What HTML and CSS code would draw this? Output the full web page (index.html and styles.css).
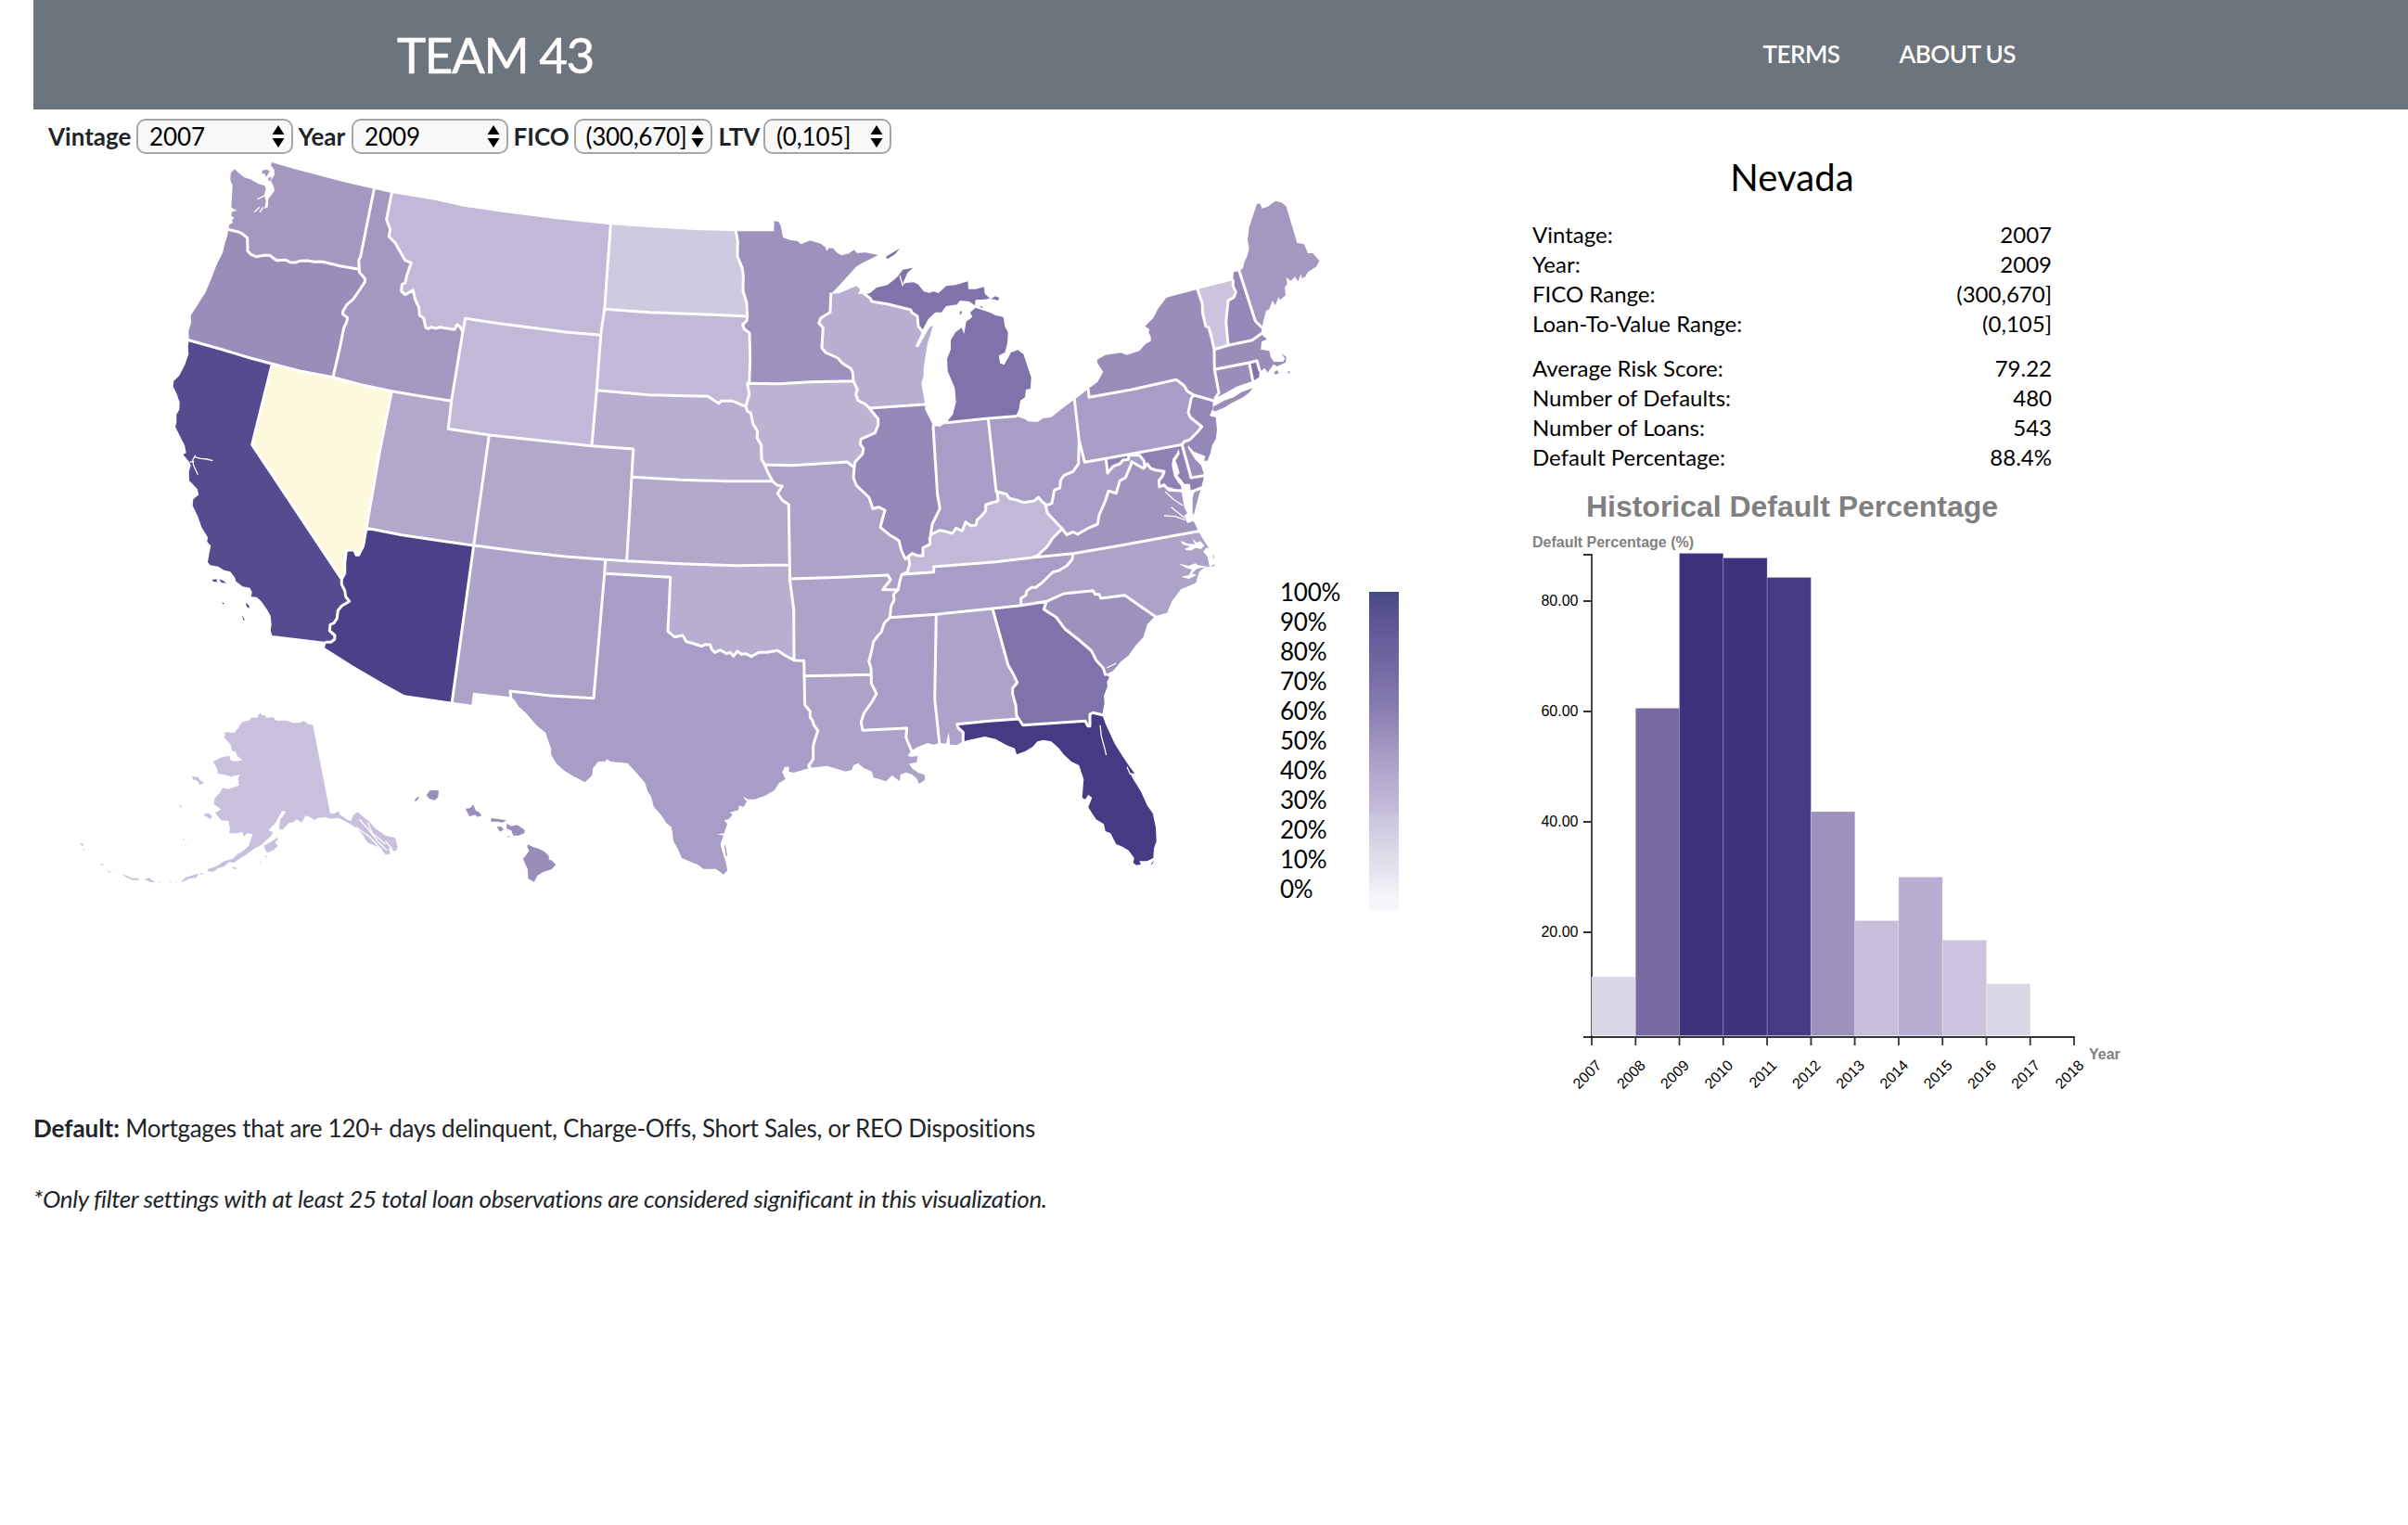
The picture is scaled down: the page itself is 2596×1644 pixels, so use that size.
FILE: index.html
```html
<!DOCTYPE html>
<html lang="en">
<head>
<meta charset="utf-8">
<title>Team 43</title>
<link rel="stylesheet" href="styles.css">
</head>
<body>
<header class="topbar">
  <h1 class="brand">TEAM 43</h1>
  <nav class="nav"><a class="nav-link">TERMS</a><a class="nav-link">ABOUT US</a></nav>
</header>
<main class="main">
  <section class="map-panel">
    <div class="filters">
      <label class="filter-label l-vintage">Vintage</label>
      <div class="select s-vintage"><span>2007</span><svg class="arrows" viewBox="0 0 14 24"><path d="M7 0L13.5 10H.5zM7 24L13.5 14H.5z"/></svg></div>
      <label class="filter-label l-year">Year</label>
      <div class="select s-year"><span>2009</span><svg class="arrows" viewBox="0 0 14 24"><path d="M7 0L13.5 10H.5zM7 24L13.5 14H.5z"/></svg></div>
      <label class="filter-label l-fico">FICO</label>
      <div class="select s-fico"><span>(300,670]</span><svg class="arrows" viewBox="0 0 14 24"><path d="M7 0L13.5 10H.5zM7 24L13.5 14H.5z"/></svg></div>
      <label class="filter-label l-ltv">LTV</label>
      <div class="select s-ltv"><span>(0,105]</span><svg class="arrows" viewBox="0 0 14 24"><path d="M7 0L13.5 10H.5zM7 24L13.5 14H.5z"/></svg></div>
    </div>
    <svg class="map" viewBox="36 166 1560 1024" width="1560" height="1024">
      <defs>
        <linearGradient id="ramp" x1="0" y1="0" x2="0" y2="1">
          <stop offset="0" stop-color="#464a86"/><stop offset=".08" stop-color="#5b5393"/>
          <stop offset=".24" stop-color="#7569a3"/><stop offset=".38" stop-color="#8b80b1"/>
          <stop offset=".51" stop-color="#a79dc5"/><stop offset=".61" stop-color="#b8aed1"/>
          <stop offset=".69" stop-color="#c6bedb"/><stop offset=".7" stop-color="#cac4de"/>
          <stop offset=".8" stop-color="#dad6e6"/><stop offset=".91" stop-color="#ecebf4"/>
          <stop offset=".96" stop-color="#f6f5fa"/><stop offset="1" stop-color="#f7f6fb"/>
        </linearGradient>
      </defs>
      <g id="states"></g>
      <g class="legend">
        <text x="1380" y="648">100%</text><text x="1380" y="680">90%</text>
        <text x="1380" y="712">80%</text><text x="1380" y="744">70%</text>
        <text x="1380" y="776">60%</text><text x="1380" y="808">50%</text>
        <text x="1380" y="840">40%</text><text x="1380" y="872">30%</text>
        <text x="1380" y="904">20%</text><text x="1380" y="936">10%</text>
        <text x="1380" y="968">0%</text>
        <rect x="1476" y="638" width="32" height="344" fill="url(#ramp)"/>
      </g>
    </svg>
  </section>
  <section class="detail">
    <h2 class="state-name">Nevada</h2>
    <dl class="facts">
      <dt>Vintage:</dt><dd>2007</dd>
      <dt>Year:</dt><dd>2009</dd>
      <dt>FICO Range:</dt><dd>(300,670]</dd>
      <dt>Loan-To-Value Range:</dt><dd>(0,105]</dd>
    </dl>
    <dl class="facts">
      <dt>Average Risk Score:</dt><dd>79.22</dd>
      <dt>Number of Defaults:</dt><dd>480</dd>
      <dt>Number of Loans:</dt><dd>543</dd>
      <dt>Default Percentage:</dt><dd>88.4%</dd>
    </dl>
    <svg class="chart" viewBox="1652 516 660 680" width="660" height="680">
      <text class="chart-title" x="1710" y="557" textLength="444">Historical Default Percentage</text>
      <text class="axis-title" x="1652" y="589.5" textLength="174">Default Percentage (%)</text>
      <text class="axis-title" x="2252" y="1142">Year</text>
      <path class="axis" d="M1707 598H1716V1118H1707M1707 648H1716M1707 767H1716M1707 886H1716M1707 1005H1716"/>
      <path class="axis" d="M1716 1127V1118H2236V1127M1763.3 1118v9M1810.5 1118v9M1857.8 1118v9M1905.1 1118v9M1952.4 1118v9M1999.6 1118v9M2046.9 1118v9M2094.2 1118v9M2141.5 1118v9M2188.7 1118v9"/>
      <g class="bars">
        <rect x="1716" y="1053" width="47.3" height="63.5" fill="#dad6e6"/>
        <rect x="1763.3" y="763.5" width="47.3" height="353" fill="#7769a1"/>
        <rect x="1810.5" y="596.5" width="47.3" height="520" fill="#3c327d"/>
        <rect x="1857.8" y="601.5" width="47.3" height="515" fill="#3c327d"/>
        <rect x="1905.1" y="622.5" width="47.3" height="494" fill="#473a84"/>
        <rect x="1952.4" y="875" width="47.3" height="241.5" fill="#9d92bd"/>
        <rect x="1999.6" y="992.5" width="47.3" height="124" fill="#c7bed9"/>
        <rect x="2046.9" y="945.5" width="47.3" height="171" fill="#b8aed1"/>
        <rect x="2094.2" y="1013.5" width="47.3" height="103" fill="#ccc4de"/>
        <rect x="2141.5" y="1060.5" width="47.3" height="56" fill="#dad6e6"/>
      </g>
      <g class="ytick">
        <text x="1701.5" y="653">80.00</text><text x="1701.5" y="772">60.00</text>
        <text x="1701.5" y="891">40.00</text><text x="1701.5" y="1010">20.00</text>
      </g>
      <g class="xtick">
        <text transform="translate(1727.5 1149.5) rotate(-45)">2007</text>
        <text transform="translate(1774.8 1149.5) rotate(-45)">2008</text>
        <text transform="translate(1822 1149.5) rotate(-45)">2009</text>
        <text transform="translate(1869.3 1149.5) rotate(-45)">2010</text>
        <text transform="translate(1916.6 1149.5) rotate(-45)">2011</text>
        <text transform="translate(1963.9 1149.5) rotate(-45)">2012</text>
        <text transform="translate(2011.1 1149.5) rotate(-45)">2013</text>
        <text transform="translate(2058.4 1149.5) rotate(-45)">2014</text>
        <text transform="translate(2105.7 1149.5) rotate(-45)">2015</text>
        <text transform="translate(2153 1149.5) rotate(-45)">2016</text>
        <text transform="translate(2200.2 1149.5) rotate(-45)">2017</text>
        <text transform="translate(2247.5 1149.5) rotate(-45)">2018</text>
      </g>
    </svg>
  </section>
</main>
<footer class="notes">
  <p class="note"><strong>Default:</strong> Mortgages that are 120+ days delinquent, Charge-Offs, Short Sales, or REO Dispositions</p>
  <p class="note note-em">*Only filter settings with at least 25 total loan observations are considered significant in this visualization.</p>
</footer>
<script src="map.js"></script>
</body>
</html>
```
FILE: styles.css
```css
* { box-sizing: border-box; }
body {
  margin: 0 0 0 36px;
  background: #fff;
  color: #212529;
  font-family: Lato, "Liberation Sans", sans-serif;
  font-size: 26px;
}
h1, h2, p, dl, dd { margin: 0; font-weight: 400; }

.topbar {
  height: 118px;
  padding: 0 423px 0 392px;
  display: flex;
  align-items: center;
  justify-content: space-between;
  background: #6c757d;
  color: #fff;
}
.brand { font-size: 53px; line-height: 64px; letter-spacing: -1.45px; -webkit-text-stroke: .5px #fff; }
.nav { display: flex; gap: 64px; padding-bottom: 2px; }
.nav-link { font-size: 26px; font-weight: 600; letter-spacing: -.5px; }

.main { display: flex; }
.map-panel { width: 1616px; }
.filters {
  display: flex;
  align-items: center;
  height: 48px;
  padding: 10px 0 0 16px;
}
.filter-label { font-weight: 700; line-height: 32px; padding-bottom: 1px; white-space: nowrap; }
.l-vintage { width: 94.5px; }
.l-year { width: 57px; margin-left: 6px; }
.l-fico { width: 65px; margin-left: 6px; }
.l-ltv { width: 48px; margin-left: 7px; }
.select {
  height: 38px;
  padding: 0 7px 1px 12.5px;
  display: flex;
  align-items: center;
  justify-content: space-between;
  border: 2px solid #a6a6a6;
  border-radius: 10px;
  background: #f8f8f8;
  color: #000;
  line-height: 32px;
  letter-spacing: -.1px;
  white-space: nowrap;
}
.s-vintage, .s-year { width: 169px; }
.s-fico { width: 149px; padding-left: 11px; letter-spacing: -.25px; }
.s-ltv { width: 138px; }
.arrows { width: 14px; height: 24px; flex: none; }

.map, .chart { display: block; }
.border { fill: none; stroke: #fff; stroke-width: 3; stroke-linejoin: round; stroke-linecap: round; }
.inlet { fill: none; stroke: #fff; stroke-width: 1.3; stroke-linejoin: round; }
.legend { font-size: 26px; letter-spacing: -.25px; fill: #000; }

.detail { width: 660px; padding-top: 45px; color: #000; }
.state-name { width: 560px; font-size: 40px; line-height: 56px; letter-spacing: .1px; text-align: center; }
.facts {
  width: 560px;
  margin-top: 18px;
  display: grid;
  grid-template-columns: 1fr auto;
  font-size: 24px;
  line-height: 32px;
}
.facts + .facts { margin-top: 16px; }
.facts dd { text-align: right; }
.chart { margin-top: 7px; font-family: "Liberation Sans", Arial, sans-serif; }
.chart-title { font-size: 32px; font-weight: 700; fill: #808080; }
.axis-title { font-size: 16px; font-weight: 700; fill: #808080; }
.axis { fill: none; stroke: #111; stroke-width: 1.8; stroke-opacity: .85; }
.bars rect { stroke: #fff; stroke-width: 1.2; stroke-opacity: .16; }
.ytick { font-size: 16px; text-anchor: end; }
.xtick { font-size: 16px; text-anchor: end; }

.notes { padding-top: 1px; line-height: 38px; letter-spacing: -.27px; }
.notes strong { letter-spacing: -.05px; }
.note + .note { margin-top: 38px; }
.note-em { font-style: italic; letter-spacing: -.34px; }
```
FILE: map.js
```js
// Survey tiles: origin x, origin y, units per pixel (x, y).
const tiles = {
  A: [170, 160, 3, 3], B: [500, 180, 3, 3], C: [790, 220, 3, 3], D: [1120, 200, 3, 3],
  E: [200, 520, 3, 3], F: [500, 560, 3, 3], G: [840, 520, 3, 3], H: [70, 750, 2.851, 3]
};

// Each arc is a coast or a border between two states.
const arcs = {
  waC: 'A 700,131 600,108 500,82 440,66 369,45 366,55 377,70 378,85 366,105 375,122 378,137 368,150 358,163 356,190 345,195 350,170 345,150 350,130 345,120 325,114 300,100 280,94 265,82 248,67 236,80 235,102 242,120 240,160 238,190 245,196 257,201 240,205 238,218 248,224 240,232 243,240 232,247 228,262',
  orC: 'A 228,262 226,280 217,310 210,338 190,378 175,418 155,465 130,505 107,540 109,562 100,590 101,620',
  caC: 'A 101,620 98,640 100,665 88,700 70,735 52,752 50,770 62,795 71,822 70,845 61,860 61,885 57,900 72,930 88,962 92,985 82,990 103,1015 107,1025 101,1045 102,1075 108,1080',
  caS: 'E 18,0 38,22 43,40 25,55 23,75 40,110 52,145 72,178 70,192 82,205 76,235 72,258 80,268 105,272 125,284 145,289 160,308 163,320 185,337 208,341 215,355 212,370 230,371 245,385 265,413 275,432 278,460 275,478 280,495 455,516',
  wa_or: 'A 228,262 245,266 262,270 275,277 290,290 291,332 302,343 318,350 345,346 362,346 385,362 415,361 428,368 445,369 460,364 485,363 505,367 530,366 590,380 650,391',
  wa_id: 'A 700,131 686,200 668,290 656,350 650,362 652,391',
  or_id: 'A 652,391 653,402 670,420 670,432 650,462 632,488 612,505 600,525 598,535 614,548 610,565 602,580 590,640 567,740',
  or_ca: 'A 101,620 200,648 300,678 370,697',
  or_nv: 'A 370,697 460,720 567,740',
  id_nv: 'A 567,740 660,765 757,785',
  id_ut: 'A 757,785 850,801 950,817',
  idN: 'A 700,131 757,144',
  id_mt: 'A 757,144 740,230 752,262 748,285 768,305 782,330 800,362 820,370 806,410 800,435 790,440 788,462 800,473 826,458 833,490 845,515 847,540 860,548 867,580 876,583 885,578 900,582 912,578 960,586 968,570 976,575 987,592',
  mt_wy: 'A 987,592 995,550 1110,567 1210,580 1320,594 1433,604',
  id_wy: 'A 987,592 950,817',
  ut_wy: 'A 950,817 940,907 1072,927',
  ca_nv: 'E 280,-383 215,-122 505,313',
  nv_ut: 'E 667,-295 628,-100 585,148',
  nv_az: 'E 585,148 575,205 560,235 552,235 545,218 520,220 515,262 515,295 505,313',
  ca_az: 'E 505,313 505,330 515,350 518,370 530,385 505,400 493,415 490,440 480,455 468,460 466,480 483,495 482,508 470,517 455,517',
  azM: 'E 455,517 450,535 540,592 640,650 708,688 862,710',
  ut_az: 'E 585,148 700,170 820,188 932,204',
  az_nm: 'E 932,204 862,710',
  ut_co: 'F 82,-273 32,84',
  mtN: 'B -233,84 -90,108 0,128 130,147 300,169 475,187',
  ndN: 'B 475,187 600,195 750,204 880,208',
  mnC: 'C 10,88 133,88 134,55 148,57 155,70 162,108 185,116 210,120 220,130 235,124 250,118 285,128 300,140 303,152 312,142 325,143 338,158 352,166 375,160 392,148 402,158 430,157 470,165 440,180 420,190 400,202 370,235 340,268 320,288',
  mn_wi: 'C 317,290 315,350 285,368 278,385 292,400 288,465 300,480 340,498 355,515 382,532 388,545 390,572',
  mn_ia: 'C 390,572 250,575 150,581 48,580',
  nd_mn: 'B 880,208 886,240 885,290 900,325 904,350 903,400 915,440 917,484',
  sd_mn: 'B 917,484 915,497 902,510 907,524 924,537 926,620 923,700',
  sd_ia: 'B 917,700 923,735 912,775',
  nd_sd: 'B 455,460 600,470 780,477 917,483',
  mt_nd: 'B 475,187 455,460',
  mt_sd: 'B 455,460 443,544',
  wy_sd: 'B 443,544 430,722',
  wy_ne: 'B 430,722 414,902',
  sd_ne: 'B 430,722 600,737 790,742 825,765 832,757 870,757 912,775',
  ne_ia: 'B 912,775 917,790 928,795 935,830 950,855 948,875 962,900 963,945 973,963',
  ne_mo: 'B 973,963 982,985 998,1015',
  ne_ks: 'B 545,1003 700,1012 850,1016 998,1016',
  ks_mo: 'G -22,-4 -5,10 10,12 -5,35 10,58 31,72 34,268',
  mo_ok: 'G 34,268 35,312',
  ia_mo: 'C 103,843 190,845 370,834 393,852',
  wy_co: 'B 82,867 250,885 414,902',
  co_ne: 'B 414,902 548,912 543,1003',
  co_ks: 'F 543,-137 527,133',
  co_nm: 'F 32,84 200,106 330,120 458,130',
  co_ok: 'F 458,130 527,134',
  ks_ok: 'F 527,134 700,143 880,149 1052,147',
  nm_ok: 'F 458,130 455,175',
  nm_tx: 'F 455,175 440,350 420,578 280,570 150,555 152,573',
  nmM: 'F -38,590 25,599 30,560 150,574',
  ok_tx: 'F 455,175 668,187 665,260 660,362 682,380 708,375 720,395 745,402 770,410 780,404 797,405 802,420 812,430 830,422 850,434 862,430 872,442 885,426 898,436 912,434 930,443 945,435 955,430 980,430 1015,424 1040,440 1068,455',
  ok_ar: 'F 1054,192 1067,290 1068,455',
  tx_ar: 'F 1068,455 1085,457 1100,457 1101,507',
  tx_la: 'F 1101,507 1103,600 1120,620 1120,640 1128,650 1132,665 1145,683 1130,730 1130,775 1115,797 1120,803',
  txC: 'F 152,573 165,585 178,605 200,625 235,665 265,690 272,712 282,740 283,762 300,790 325,812 355,830 392,850 415,828 418,805 435,783 458,782 462,775 475,783 500,785 530,788 550,810 585,850 595,880 605,895 615,930 640,958 655,982 672,995 678,1040 692,1065 705,1095 735,1108 755,1115 775,1130 815,1130 840,1148 853,1135 845,1100 835,1070 830,1050 840,1022 820,1018 842,1015 852,985 842,972 856,970 870,955 860,948 888,940 890,925 905,930 915,912 902,896 920,905 940,905 975,893 1005,875 1020,852 1040,840 1030,815 1045,800 1055,822 1090,812 1120,803',
  laC: 'G 100,923 155,917 215,935 235,930 240,915 255,908 275,925 300,935 305,955 325,960 345,967 365,948 390,967 392,945 410,938 430,945 445,958 452,975 472,962 470,945 450,940 430,925 420,910 445,905 448,885 430,887 415,885 428,868',
  la_ms: 'G 298,622 298,650 315,683 300,710 275,745 265,775 270,802 413,795 410,825 428,868',
  ar_la: 'G 80,626 200,624 298,622',
  ar_ms: 'G 298,622 297,600 290,580 300,540 305,515 320,495 330,485 340,455 358,437',
  ar_tn: 'G 358,437 362,400 372,380 370,362 385,347',
  mo_tn: 'G 385,347 390,320 397,298',
  mo_ar: 'G 36,312 200,307 352,300 360,315 335,347 385,347',
  mo_ky: 'G 397,298 415,290 422,265 418,240',
  mo_il: 'G 243,-48 240,-15 250,10 290,48 303,85 322,80 342,90 327,145 360,172 375,180 388,190 395,220 408,248 418,240',
  il_ky: 'G 418,240 430,230 445,236 465,238 465,212 488,200 487,180 492,168',
  in_ky: 'G 492,168 520,155 535,158 560,165 572,148 592,157 603,128 620,140 637,138 640,122 655,108 668,92 668,72 708,60 705,30',
  il_in: 'C 648,718 655,830 662,940 670,985 645,1035 640,1068',
  oh_in: 'C 826,693 852,930',
  oh_ky: 'G 705,30 735,38 745,52 770,58 790,65 825,60 838,48 850,62 862,72',
  mi_in: 'C 690,707 826,693',
  mi_oh: 'C 826,693 915,686',
  ohC: 'C 915,686 945,695 955,703 985,705 1005,692 1030,690 1060,665 1110,628',
  oh_pa: 'D 115,692 130,822',
  pa_wv: 'D 130,822 148,895 217,883',
  oh_wv: 'D 130,822 128,900 110,925 80,938 70,955 68,978 50,985 42,1028 22,1035',
  ky_wv: 'G 862,75 868,100 915,150',
  ky_va: 'G 915,150 885,180 865,210 835,237 820,243',
  wv_va: 'D 75,1110 90,1130 110,1120 125,1128 160,1108 190,1095 195,1065 215,1020 225,988 250,995 262,955 280,945 297,905 300,893 338,915',
  md_wv: 'D 217,883 222,930 240,908 262,900 272,888 290,886 290,872 325,872 340,890 342,912',
  md_va: 'D 342,912 350,900 362,915 378,920 405,925 400,940 388,955 390,975 405,968 420,985 460,987 495,990 525,978',
  mdC: 'D 525,978 535,938',
  pa_md: 'D 217,883 463,838',
  md_de: 'D 463,838 480,900 492,945 535,938',
  pa_de: 'D 463,838 470,828 488,822',
  deC: 'D 488,822 482,848 505,885 525,905 535,938',
  pa_nj: 'D 488,822 510,800 527,780 490,750 483,735 488,710 492,690 500,677',
  pa_ny: 'D 500,677 480,665 470,648 445,628 300,660 162,685 160,660',
  ny_nj: 'D 500,677 562,695',
  paC: 'D 115,692 160,658',
  nyN: 'D 160,658 190,635 208,603 190,575 188,563 215,548 265,541 285,548 325,535 345,512 362,503 362,490 355,475 358,465 343,455 370,428 385,400 412,363 440,355 513,336',
  ny_vt: 'D 513,336 528,380 530,415 540,455 550,460 558,490 567,530',
  ny_ma: 'D 567,530 568,595',
  ny_ct: 'D 568,595 582,670 570,688',
  nyS: 'D 570,688 562,695',
  vtN: 'D 513,336 570,321 628,307',
  vt_nh: 'D 628,307 628,325 637,345 630,362 612,372 605,440 612,517',
  vt_ma: 'D 567,530 612,517',
  nh_ma: 'D 612,517 690,500 718,480',
  nhC: 'D 718,480 722,458',
  nh_me: 'D 648,277 700,438 720,458',
  nhN: 'D 628,307 630,280 648,277',
  meC: 'D 648,277 660,268 665,245 673,230 680,205 675,175 680,135 705,60 715,58 722,74 740,68 765,50 785,55 800,68 835,185 858,190 870,220 885,218 907,243 898,262 870,280 862,295 850,300 848,285 838,310 828,295 815,308 800,298 803,318 795,330 798,355 780,370 775,360 765,388 755,372 745,400 735,405 728,430 722,458',
  ma_ct: 'D 568,595 680,573',
  ma_ri: 'D 680,573 705,567 714,598',
  ct_ri: 'D 680,573 692,632',
  maC: 'D 718,480 738,497 720,505 718,530 745,535 750,555 760,570 790,570 796,560 785,543 800,555 798,572 770,585 758,578 740,605 730,590 722,598 714,598',
  riC: 'D 714,598 712,620 692,632',
  ctC: 'D 692,632 640,650 605,670 570,688',
  njC: 'D 562,695 563,720 552,745 572,750 576,790 572,820 560,840 555,865 545,890 535,890 538,875 500,860 483,840 488,822',
  vaC: 'D 525,978 515,1010 500,1068 505,1090 515,1118',
  va_nc: 'G 1355,158 1100,205 950,230',
  va_tn: 'G 950,230 820,243',
  ky_tn: 'G 820,243 700,257 500,273 500,290 397,298',
  tn_nc: 'G 950,230 948,248 930,270 905,285 885,290 850,325 830,340 815,340 800,352 798,365 782,375 782,397',
  tn_ga: 'G 690,408 782,398',
  nc_ga: 'G 782,398 865,385',
  tn_al: 'G 508,427 690,408',
  tn_ms: 'G 358,437 508,427',
  ms_al: 'G 508,427 505,600 503,700 518,842',
  al_ga: 'G 690,408 740,590 760,625 770,648 755,665 755,685 765,720 768,755 775,765',
  al_fl: 'G 775,765 680,772 575,782 580,795 595,808 595,838',
  ga_fl: 'G 775,765 788,785 990,772 998,788 1005,788 1005,750 1015,745 1045,752',
  ga_sc: 'G 865,385 856,410 870,420 895,435 925,475 970,510 1010,545 1025,575 1048,600 1055,622',
  nc_sc: 'G 865,385 920,360 1015,350 1022,362 1035,362 1040,375 1118,365 1165,398 1215,433',
  ncC: 'G 1355,158 1375,190 1390,212 1380,212 1372,225 1385,240 1392,272 1375,275 1358,290 1348,325 1325,335 1300,345 1270,385 1255,422 1215,433',
  scC: 'G 1215,433 1190,460 1178,500 1155,525 1140,545 1130,560 1105,580 1080,610 1055,622',
  gaC: 'G 1055,622 1068,630 1060,645 1062,660 1050,690 1052,715 1045,752',
  flC: 'G 1045,752 1055,780 1085,845 1110,885 1130,915 1150,942 1135,940 1145,960 1170,1000 1190,1045 1208,1070 1218,1115 1220,1160 1212,1185 1210,1215 1190,1225 1165,1225 1170,1235 1155,1238 1145,1230 1148,1215 1130,1190 1110,1178 1090,1170 1072,1135 1055,1128 1050,1105 1025,1090 1012,1070 1000,1050 1012,1020 1000,1010 990,1025 980,1020 985,960 970,915 945,903 920,880 905,860 880,838 855,833 835,838 820,855 795,870 768,880 762,860 735,850 700,830 665,822 620,832 595,838',
  alC: 'G 595,838 575,850 553,848 548,808 540,845 518,843',
  msC: 'G 518,843 500,848 480,843 445,857 428,868',
  wiN: 'C 317,290 345,288 375,275 400,265 412,275 405,290 425,290',
  wi_mi: 'C 425,290 445,305 450,315 500,323 575,342 580,352 597,362 600,395 612,410',
  wiM: 'C 612,410 605,430 590,460 600,463 635,400 648,392 630,450 622,500 617,530 617,555 610,580 622,648',
  ilC: 'C 622,648 622,665 635,690 648,718',
  inC: 'C 648,718 670,720 690,707',
  wi_il: 'C 442,660 622,648',
  wi_ia: 'C 390,572 403,600 398,615 405,635 430,648 442,660',
  il_ia: 'C 442,660 470,695 470,715 460,740 415,760 412,775 422,790 420,808 395,835 393,852',
  upC: 'C 425,293 445,287 465,270 500,262 530,238 550,212 583,206 565,222 548,262 560,255 585,253 600,260 618,283 635,287 650,283 665,288 690,265 720,262 760,250 762,275 785,275 812,268 815,290 832,305 815,308 785,310 783,328 765,315 735,312 725,325 690,330 675,350 655,350 632,372 612,410',
  miL: 'C 690,707 712,680 722,640 718,595 695,540 693,500 705,470 705,440 720,415 740,400 748,420 755,380 775,365 768,350 785,335 830,350 850,360 875,365 880,395 890,415 888,450 880,480 860,490 865,515 878,520 900,480 922,472 940,485 965,560 963,597 948,600 945,625 930,635 925,665 915,686'
};

const states = [
  ['#a498c0', 'waC wa_or wa_id'],
  ['#9a8db9', 'orC or_ca or_nv or_id wa_or'],
  ['#564b8f', 'caC caS ca_az ca_nv or_ca'],
  ['#fdf9dc', 'or_nv ca_nv nv_az nv_ut id_nv'],
  ['#a498c0', 'idN wa_id or_id id_nv id_ut id_wy id_mt'],
  ['#c2b9d8', 'mtN id_mt mt_wy mt_sd mt_nd'],
  ['#c2b9d8', 'mt_wy id_wy ut_wy wy_co wy_ne wy_sd'],
  ['#b1a8cc', 'id_ut ut_wy ut_co ut_az nv_ut'],
  ['#4c4089', 'ut_az nv_az ca_az azM az_nm'],
  ['#ada3c9', 'az_nm nmM nm_tx nm_ok co_nm'],
  ['#b1a8cc', 'ut_co co_nm co_ok co_ks co_ne wy_co'],
  ['#cfcae0', 'ndN mt_nd nd_sd nd_mn'],
  ['#c2b9d8', 'nd_sd mt_sd wy_sd sd_ne sd_ia sd_mn'],
  ['#b8aed1', 'sd_ne wy_ne co_ne ne_ks ne_mo ne_ia'],
  ['#b1a8cc', 'ne_ks co_ks ks_ok ks_mo'],
  ['#b8aed1', 'ks_ok co_ok nm_ok ok_tx ok_ar mo_ok'],
  ['#a79dc6', 'ok_tx nm_tx txC tx_la tx_ar'],
  ['#9d92bd', 'mnC mn_wi mn_ia sd_mn nd_mn'],
  ['#bdb4d4', 'mn_ia wi_ia il_ia ia_mo ne_ia sd_ia'],
  ['#ada3c9', 'ia_mo mo_il mo_ky mo_tn mo_ar mo_ok ks_mo ne_mo'],
  ['#ada3c9', 'mo_ar ar_tn ar_ms ar_la tx_ar ok_ar'],
  ['#ada3c9', 'ar_la tx_la laC la_ms'],
  ['#a79dc6', 'la_ms msC ms_al tn_ms ar_ms'],
  ['#ada3c9', 'ms_al alC al_fl al_ga tn_al'],
  ['#8072aa', 'tn_ga al_ga ga_fl gaC ga_sc nc_ga'],
  ['#473a84', 'al_fl flC ga_fl'],
  ['#9d92bd', 'nc_sc ga_sc scC'],
  ['#ada3c9', 'va_nc tn_nc nc_ga nc_sc ncC'],
  ['#a79dc6', 'ky_tn va_tn tn_nc tn_ga tn_al tn_ms ar_tn mo_tn'],
  ['#c2b9d8', 'mo_ky il_ky in_ky oh_ky ky_wv ky_va ky_tn'],
  ['#a195c0', 'ky_va wv_va md_va vaC va_nc va_tn'],
  ['#a79dc6', 'ky_wv wv_va md_wv pa_wv oh_wv'],
  ['#8f81b4', 'md_wv md_va mdC md_de pa_md'],
  ['#9a8db9', 'md_de deC pa_de'],
  ['#a79dc6', 'paC oh_pa pa_wv pa_md pa_de pa_nj pa_ny'],
  ['#a79dc6', 'oh_pa oh_wv oh_ky oh_in mi_oh ohC'],
  ['#a79dc6', 'oh_in in_ky il_in inC mi_in'],
  ['#9388b7', 'wi_il il_ia mo_il il_ky il_in ilC'],
  ['#b8aed1', 'wiN mn_wi wi_ia wi_il wiM wi_mi'],
  ['#8072aa', 'miL mi_oh mi_in'],
  ['#8072aa', 'upC wi_mi'],
  ['#9a8db9', 'nyN pa_ny ny_nj nyS ny_ct ny_ma ny_vt'],
  ['#9388b7', 'ny_nj pa_nj njC'],
  ['#ccc4de', 'vtN ny_vt vt_ma vt_nh'],
  ['#9388b7', 'nhN vt_nh nh_ma nhC nh_me'],
  ['#a498c0', 'meC nh_me'],
  ['#9a8db9', 'vt_ma ny_ma ma_ct ma_ri maC nh_ma'],
  ['#9a8db9', 'ma_ct ny_ct ctC ct_ri'],
  ['#8072aa', 'ma_ri ct_ri riC']
];

// Islands and the two detached states.
const AK = '#c8c0dc', HI = '#9a8db9';
const pieces = [
  ['#8072aa', 'C 495,170 515,158 540,143 525,162 500,178'],
  ['#8072aa', 'C 835,308 848,298 862,303 858,312 846,308'],
  ['#8072aa', 'C 798,330 810,332 804,336'],
  ['#8072aa', 'C 735,345 741,348 738,358 734,356'],
  ['#a498c0', 'A 338,72 350,68 362,72 358,82 350,92 346,82 338,82'],
  ['#a498c0', 'A 358,95 368,92 366,103 358,106'],
  ['#9a8db9', 'D 565,715 600,695 630,685 655,668 692,655 680,670 660,685 620,705 600,718 572,730 563,728'],
  ['#9a8db9', 'D 760,605 770,597 776,607 765,611'],
  ['#9a8db9', 'D 803,606 810,598 812,607'],
  ['#ada3c9', 'G 1403,232 1408,240 1405,248'],
  ['#ada3c9', 'G 1392,274 1408,264 1408,270'],
  ['#a79dc6', 'F 845,1050 853,1088 848,1088 843,1060'],
  ['#564b8f', 'E 85,315 100,313 102,322 92,322'],
  ['#564b8f', 'E 110,313 122,318 132,326 115,324'],
  ['#564b8f', 'E 117,388 125,391 122,395'],
  ['#564b8f', 'E 194,389 206,398 205,408 198,402'],
  ['#564b8f', 'E 183,428 192,446 186,444'],
  ['#473a84', 'G 1200,1238 1212,1222 1208,1232'],
  [AK, 'H 600,55 607,64 615,63 620,71 640,70 648,80 680,80 700,88 720,88 735,82 748,92 762,95 815,380 828,382 840,373 845,385 870,402 880,405 885,388 900,376 912,388 930,402 955,430 985,452 1015,460 1023,490 1018,502 1008,502 1005,490 995,495 1000,512 985,514 975,500 960,488 930,475 915,450 900,430 880,418 860,405 840,395 815,398 800,392 775,396 768,402 752,392 740,388 728,410 712,400 700,410 690,410 670,432 658,432 662,400 680,375 668,372 655,395 645,415 625,435 640,442 632,455 600,485 585,492 560,512 540,525 520,540 505,538 490,552 470,558 455,570 438,567 440,560 465,552 490,535 515,528 530,512 550,500 565,485 577,448 560,445 550,456 545,440 530,445 505,445 507,428 503,405 480,403 470,390 462,378 480,368 458,350 460,332 475,315 485,298 500,302 535,290 532,270 537,255 510,262 490,255 470,252 468,236 455,213 480,200 505,194 510,210 528,212 545,208 530,195 525,182 513,178 510,160 490,135 492,118 520,120 530,108 545,85 565,80 575,70 590,72'],
  [AK, 'H 390,260 410,264 415,272 428,282 415,289 405,273 395,272'],
  [AK, 'H 428,382 442,380 453,390 447,400 438,392 430,390'],
  [AK, 'H 350,350 360,360 355,362'],
  [AK, 'H 612,485 635,472 652,458 655,465 645,475 655,485 640,500 622,508 615,498'],
  [AK, 'H 358,600 370,588 395,580 410,575 405,588 380,592 362,602'],
  [AK, 'H 412,577 428,573 418,580'], [AK, 'H 510,552 530,558 522,562'],
  [AK, 'H 46,475 58,481 56,486 50,483'], [AK, 'H 52,497 62,497 60,501'],
  [AK, 'H 106,545 119,543 116,549'], [AK, 'H 130,562 140,570 136,573'], [AK, 'H 147,561 154,562 150,564'],
  [AK, 'H 175,577 192,583 205,590 225,590 228,596 208,596 185,585'],
  [AK, 'H 245,594 260,589 268,598 280,603 262,602'], [AK, 'H 288,602 296,602 292,605'],
  [AK, 'H 322,601 329,602 325,605'], [AK, 'H 340,600 347,601 342,603'],
  [AK, 'H 362,463 368,463 366,467'], [AK, 'H 369,485 374,484 372,488'],
  [AK, 'H 613,520 625,517 620,522'], [AK, 'H 597,540 602,538 600,543'],
  [HI, 'H 1111,322 1122,307 1138,305 1149,308 1147,328 1136,338 1120,333'],
  [HI, 'H 1075,337 1088,325 1087,333 1077,343'],
  [HI, 'H 1231,365 1245,364 1255,352 1263,372 1272,376 1281,388 1267,392 1262,385 1243,390'],
  [HI, 'H 1311,396 1332,399 1357,403 1345,410 1330,407 1309,407'],
  [HI, 'H 1328,424 1341,423 1348,433 1338,440 1332,433'],
  [HI, 'H 1358,413 1371,422 1390,418 1413,434 1412,444 1395,452 1378,452 1372,436 1358,430'],
  [HI, 'H 1357,458 1368,452 1366,457'],
  [HI, 'H 1423,481 1440,490 1455,494 1475,505 1488,520 1487,530 1495,532 1509,547 1495,562 1470,570 1452,582 1442,602 1424,592 1422,560 1408,528 1427,502 1421,490']
];

const water = [
  'D 452,852 445,868 432,885 430,905 437,940 450,960 460,972 462,995 470,1040 480,1060 470,1068 480,1092 500,1085 514,1112 505,1070 497,1060 497,1010 503,990 492,992 488,965 470,965 460,950 448,938 455,930 448,905 442,890 455,868',
  'G 1298,188 1320,198 1345,200 1335,180 1350,195 1362,190 1375,205 1365,215 1345,212 1335,220 1318,220 1310,215 1330,208 1305,200',
  'G 1292,263 1325,270 1345,262 1355,268 1385,272 1350,280 1335,295 1350,300 1325,312 1300,305 1325,300 1335,282 1320,278',
  'F 1038,800 1053,800 1050,815 1072,820 1045,838 1030,818'
];
const inlets = [
  'A 352,108 355,150 352,190', 'A 356,140 342,155 322,164', 'A 330,190 312,206', 'A 342,190 330,206', 'A 364,110 362,135',
  'A 122,992 113,1008 116,1025 130,1055', 'A 105,1014 118,1012', 'A 118,998 140,1003 160,1005 178,1010',
  'D 408,990 435,1015 465,1035', 'D 405,1068 440,1070 475,1082', 'D 428,1040 455,1062 470,1075', 'D 390,970 430,980 465,992',
  'G 1038,785 1042,820 1050,850 1058,882', 'G 1125,920 1136,945',
  'H 895,425 935,455 975,500', 'H 905,400 935,435 960,470 990,500', 'H 930,410 945,445 985,480', 'H 985,470 1005,495',
  'C 540,230 550,265', 'G 1060,600 1090,585', 'G 243,930 270,933'
];

const parse = s => {
  const [x, y, sx, sy] = tiles[s[0]];
  return s.slice(2).split(' ').map(p => {
    const [a, b] = p.split(',').map(Number);
    return [+(x + a / sx).toFixed(1), +(y + b / sy).toFixed(1)];
  });
};
const line = pts => 'M' + pts.map(p => p.join(' ')).join('L');
const dist = (p, q) => Math.hypot(p[0] - q[0], p[1] - q[1]);
const last = a => a[a.length - 1];

// Chain arcs into one outline, turning each to start where the previous one ended.
const ring = names => {
  const list = names.map(n => parse(arcs[n]));
  const nearest = p => Math.min(dist(p, list[1][0]), dist(p, last(list[1])));
  let out = nearest(list[0][0]) < nearest(last(list[0])) ? [...list[0]].reverse() : list[0];
  for (const a of list.slice(1)) {
    const end = last(out);
    out = out.concat(dist(end, a[0]) <= dist(end, last(a)) ? a : [...a].reverse());
  }
  return out;
};

const root = document.getElementById('states');
const draw = (d, attrs) => {
  const el = document.createElementNS('http://www.w3.org/2000/svg', 'path');
  el.setAttribute('d', d);
  for (const k in attrs) el.setAttribute(k, attrs[k]);
  root.appendChild(el);
};

const used = {};
for (const [color, names] of states) {
  const list = names.split(' ');
  list.forEach(n => { used[n] = (used[n] || 0) + 1; });
  draw(line(ring(list)) + 'Z', { fill: color });
}
water.forEach(w => draw(line(parse(w)) + 'Z', { fill: '#fff' }));
for (const [color, shape] of pieces) draw(line(parse(shape)) + 'Z', { fill: color });
inlets.forEach(i => draw(line(parse(i)), { class: 'inlet' }));
draw(Object.keys(arcs).filter(n => used[n] > 1).map(n => line(parse(arcs[n]))).join(''), { class: 'border' });
```
